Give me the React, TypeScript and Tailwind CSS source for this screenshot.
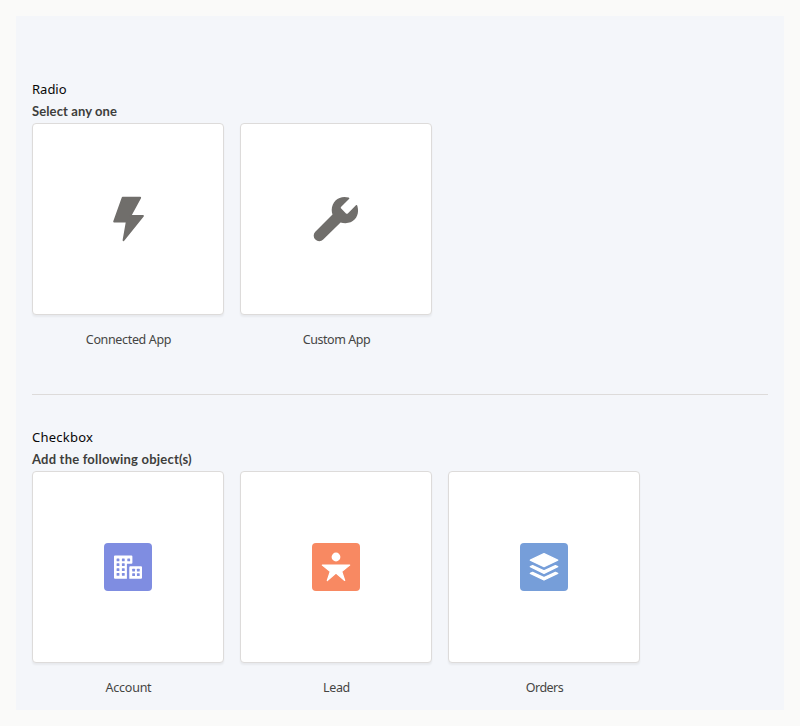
import type { ReactNode } from 'react';

function BoltIcon() {
  return (
    <svg viewBox="0 0 48 48" className="size-12" fill="#706e6b" stroke="#706e6b" strokeWidth="1.8" strokeLinejoin="round">
      <path d="M18.6 2.7H36.2L26.4 20.9H39L19.5 45.2L22.8 26.5H10.1Z" />
    </svg>
  );
}

function WrenchIcon() {
  return (
    <svg viewBox="0 0 48 48" className="size-12" fill="#706e6b">
      <path d="M36.6 2.6c.9.4 1 .9.4 1.5L29.2 11.8c-.6.6-.6 1.2 0 1.8l4.8 4.8c.6.6 1.2.6 1.8 0l7.9-7.900c.7-.7 1.4-.5 1.7.4C48 20.5 42.5 28 33.5 28.2c-1.8 0-3.4-.2-4.9-.7L11.2 44.500a5.5 5.5 0 0 1-7.900-7.800L20.5 19.500c-.5-1.5-.8-3-.8-4.600C19.9 5.700 28 .1 36.600 2.600Z" />
    </svg>
  );
}

const windows: [number, number][] = [
  [14, 16.9], [19.3, 16.9], [24.7, 16.9],
  [14, 21.7], [19.3, 21.7],
  [14, 26.6], [19.3, 26.6],
  [14, 31.4], [19.3, 31.4],
  [29.6, 27.1], [34.3, 27.1],
  [29.6, 31.7], [34.3, 31.7],
];

function AccountIcon() {
  return (
    <svg viewBox="0 0 48 48" className="size-12 rounded bg-[#7f8de1]">
      <path fill="#fff" d="M11 12.400h16.400a1 1 0 0 1 1 1v6.300a1 1 0 0 1-1 1h-4.500v15H11a1 1 0 0 1-1-1V13.400a1 1 0 0 1 1-1ZM26.300 23.300H37a1 1 0 0 1 1 1v10.400a1 1 0 0 1-1 1H25.300V24.300a1 1 0 0 1 1-1Z" />
      {windows.map(([x, y]) => (
        <rect key={`${x}-${y}`} x={x - 1.4} y={y - 1.4} width="2.8" height="2.8" rx=".5" fill="#7f8de1" />
      ))}
    </svg>
  );
}

function LeadIcon() {
  return (
    <svg viewBox="0 0 48 48" className="size-12 rounded bg-[#f88962]" fill="#fff">
      <circle cx="24" cy="14" r="4.4" />
      <path stroke="#fff" strokeWidth="1.2" strokeLinejoin="round" d="M10.3 22.1H37.7L29.7 28.5L32.7 37.5L24 30L15.3 37.5L18.3 28.5Z" />
    </svg>
  );
}

function OrdersIcon() {
  return (
    <svg viewBox="0 0 48 48" className="size-12 rounded bg-[#769ed9]" fill="#fff" stroke="#fff" strokeWidth="1.3" strokeLinejoin="round">
      <path d="M24 10.7L37.7 17.2L24 23.7L10.3 17.2Z" />
      <path d="M10.3 23.7L12.6 22.6L24 27.9L35.4 22.6L37.7 23.7L24 30.3Z" />
      <path d="M10.3 30.4L12.6 29.3L24 34.6L35.4 29.3L37.7 30.4L24 37Z" />
    </svg>
  );
}

function VisualPicker({ label, spacing, children }: { label: string; spacing: string; children: ReactNode }) {
  return (
    <label className="block w-48">
      <span className="flex size-48 items-center justify-center rounded border border-[#dddbda] bg-white shadow-[0_2px_2px_0_rgba(0,0,0,0.05)]">
        {children}
      </span>
      <span className={`mt-[15px] block pl-px text-center text-[12.5px] leading-5 whitespace-nowrap text-[#454543] ${spacing}`}>{label}</span>
    </label>
  );
}

export default function App() {
  return (
    <main className="h-[726px] bg-[#fafaf9] p-4 font-['Noto_Sans',sans-serif]">
      <div className="h-[694px] bg-[#f4f6fa] px-4 pt-[63px]">
        <section>
          <h2 className="text-[13px] leading-5 text-[#080707]">Radio</h2>
          <p className="pt-0.5 pb-px font-['Lato',sans-serif] text-[13px] leading-[21px] font-bold tracking-[0.1px] text-[#3e3e3c]">Select any one</p>
          <div className="flex gap-4">
            <VisualPicker label="Connected App" spacing="tracking-[-0.35px]"><BoltIcon /></VisualPicker>
            <VisualPicker label="Custom App" spacing="tracking-[-0.45px]"><WrenchIcon /></VisualPicker>
          </div>
        </section>
        <hr className="mt-11 border-[#dddbda]" />
        <section className="mt-8">
          <h2 className="text-[13px] leading-5 tracking-[0.25px] text-[#080707]">Checkbox</h2>
          <p className="pt-0.5 pb-px font-['Lato',sans-serif] text-[13px] leading-[21px] font-bold tracking-[0.2px] text-[#3e3e3c]">Add the following object(s)</p>
          <div className="flex gap-4">
            <VisualPicker label="Account" spacing="tracking-[-0.25px]"><AccountIcon /></VisualPicker>
            <VisualPicker label="Lead" spacing="tracking-[-0.35px]"><LeadIcon /></VisualPicker>
            <VisualPicker label="Orders" spacing="tracking-[-0.5px]"><OrdersIcon /></VisualPicker>
          </div>
        </section>
      </div>
    </main>
  );
}
